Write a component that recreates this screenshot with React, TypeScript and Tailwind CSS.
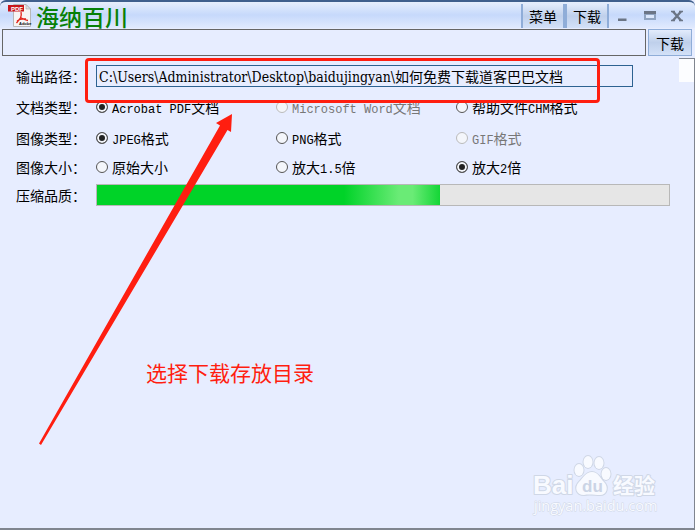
import React from 'react';

type Option = { text: string[]; disabled?: boolean };

const rows: { name: string; label: string; checked: number; height: string; options: Option[] }[] = [
  {
    name: 'doc', label: '文档类型：', checked: 0, height: 'h-8',
    options: [{ text: ['Acrobat PDF', '文档'] }, { text: ['Microsoft Word', '文档'], disabled: true }, { text: ['', '帮助文件', 'CHM', '格式'] }],
  },
  {
    name: 'image', label: '图像类型：', checked: 0, height: 'h-[30px]',
    options: [{ text: ['JPEG', '格式'] }, { text: ['PNG', '格式'] }, { text: ['GIF', '格式'], disabled: true }],
  },
  {
    name: 'size', label: '图像大小：', checked: 2, height: 'h-7',
    options: [{ text: ['', '原始大小'] }, { text: ['', '放大', '1.5', '倍'] }, { text: ['', '放大', '2', '倍'] }],
  },
];

const barButton =
  'border-[#8fadd8] bg-linear-to-b from-[#e3ecfc] via-[#bfd0eb] to-[#d3e1f8] text-sm leading-none text-black';

function PdfIcon() {
  return (
    <svg className="ml-2 h-[23px] w-6 shrink-0 overflow-visible" viewBox="0 0 24 23" aria-hidden="true">
      <path d="M5.500 .5h12.500l4.500 4.500v17.500h-17z" fill="#f7f5f4" stroke="#b8b8b8" />
      <path d="M18 .5v4.500h4.500z" fill="#dedede" stroke="#aaa" strokeWidth=".6" />
      <path d="M0 1h16v6.500H0z" fill="#c8161a" />
      <text x="3" y="6.500" fontSize="6" fontWeight="700" fill="#fff" fontFamily="Liberation Sans">PDF</text>
      <path d="M13 8c.5 2 .5 4-.5 6l-4 5M12.500 13.500c2 1 4 2.500 7.500 3M9 17c2-1.500 5-2.500 9-2" fill="none" stroke="#e2231a" strokeWidth="1.300" />
      <text x="11" y="21" fontSize="4" fontWeight="700" fill="#111" fontFamily="Liberation Sans">Adobe</text>
    </svg>
  );
}

function TitleBar() {
  return (
    <header className="flex h-7 items-start rounded-t-md border-t-2 border-[#3f5f8c] bg-linear-to-b from-[#e6eefc] via-[#c6d9fb] to-[#e1eafe] pr-3 pt-0.5">
      <PdfIcon />
      <h1 className="ml-1 flex-1 text-[23px] font-medium leading-6 text-[#078007]">海纳百川</h1>
      <button type="button" className={`${barButton} h-6 w-11 border-x-2`}>菜单</button>
      <button type="button" className={`${barButton} h-6 w-11 border-x-2`}>下载</button>
      <div className="ml-2 flex h-6 items-center gap-[15px] text-[#6b7585]">
        <button type="button" aria-label="最小化" className="size-3">
          <svg viewBox="0 0 12 12"><path d="M1 8.500h8.500v2.500H1z" fill="currentColor" /></svg>
        </button>
        <button type="button" aria-label="最大化" className="size-3">
          <svg viewBox="0 0 12 12">
            <path d="M0 1h12v9H0z" fill="#8fa3bf" />
            <path d="M0 1h12v3H0z" fill="currentColor" />
            <path d="M2 5h8v3H2z" fill="#dbe7fb" />
          </svg>
        </button>
        <button type="button" aria-label="关闭" className="size-3">
          <svg viewBox="0 0 12 12">
            <path d="M2 1.500l8 9M10 1.500l-8 9" stroke="currentColor" strokeWidth="2.400" />
            <path d="M0 1.500h4M8 1.500h4M0 10.500h4M8 10.500h4" stroke="currentColor" strokeWidth="1.300" />
          </svg>
        </button>
      </div>
    </header>
  );
}

function RadioOption({ name, option, checked }: { name: string; option: Option; checked: boolean }) {
  return (
    <label className={`flex w-[180px] items-center gap-1 whitespace-nowrap ${option.disabled ? 'text-[#777]' : ''}`}>
      <input
        type="radio"
        name={name}
        defaultChecked={checked}
        disabled={option.disabled}
        className="size-3 shrink-0 appearance-none rounded-full border border-[#555] bg-[#f4f6fb] checked:bg-[#222] checked:shadow-[inset_0_0_0_2px_#f4f6fb] disabled:border-[#bbb]"
      />
      <span>
        {option.text.map((part, i) => (
          <span key={i} className={i % 2 === 0 ? "font-['Liberation_Mono',monospace] text-xs" : ''}>{part}</span>
        ))}
      </span>
    </label>
  );
}

function Watermark() {
  return (
    <svg className="absolute bottom-3 right-[37px] h-16 w-[126px] overflow-visible" viewBox="0 0 126 64" role="img" aria-label="Baidu经验">
      <g fill="#f8faff" stroke="#cfd7e6" strokeWidth="2" paintOrder="stroke" strokeLinejoin="round">
        <ellipse cx="47" cy="18" rx="4.500" ry="6" />
        <ellipse cx="56" cy="10" rx="4.500" ry="6" />
        <ellipse cx="67" cy="11" rx="4.500" ry="6" />
        <ellipse cx="74" cy="22" rx="4.500" ry="6" />
        <path d="M60 20c6 0 8 6 12 10 5 5 3 13-4 13-5 0-11-1-16 0-8 0-10-8-5-13 4-4 7-10 13-10z" />
        <text x="1" y="42" fontSize="26" fontWeight="700" fontFamily="Liberation Sans">Bai</text>
        <text x="81" y="41" fontSize="21" fontWeight="700" fontFamily="Noto Sans CJK SC">经验</text>
        <text x="2" y="59" fontSize="14.500" strokeWidth="1" fontFamily="Open Sans">jingyan.baidu.com</text>
      </g>
      <text x="50" y="40" fontSize="17" fontWeight="700" fontFamily="Liberation Sans" fill="#cbd4e5">du</text>
    </svg>
  );
}

function Annotations() {
  return (
    <div className="pointer-events-none">
      <div className="absolute left-[85px] top-[58px] h-[45px] w-[515px] rounded border-3 border-[#ff1e10]" />
      <svg className="absolute left-[30px] top-[110px] h-[340px] w-[210px]" viewBox="30 110 210 340" aria-hidden="true">
        <path d="M39 443.500L220 125.500L216 123L232 114L231 132L227.500 130L41 445z" fill="#ff1e10" />
      </svg>
      <p className="absolute left-[146px] top-[358px] text-[21px] leading-7 text-[#ff1e10]">选择下载存放目录</p>
    </div>
  );
}

export default function App() {
  return (
    <main className="relative flex min-h-screen flex-col border-b-2 border-[#80858f] bg-[#e7edff] font-['Noto_Sans_CJK_SC',sans-serif] text-sm text-black">
      <TitleBar />
      <div className="flex h-7 items-stretch gap-0.5 pl-0.5 pr-[3px] pt-px">
        <input aria-label="网址" className="min-w-0 flex-1 border border-[#666] bg-transparent px-1 outline-none" />
        <button type="button" className={`${barButton} w-11 border`}>下载</button>
      </div>
      <div className="mt-0.5 flex flex-1 border-r border-[#80858f]">
        <form className="flex flex-1 flex-col pl-4 pr-[9px] pt-[3px]">
          <div className="flex h-[30px] items-center">
            <label htmlFor="path" className="w-20 shrink-0">输出路径：</label>
            <input
              id="path"
              defaultValue="C:\Users\Administrator\Desktop\baidujingyan\如何免费下载道客巴巴文档"
              className="mr-[37px] h-[22px] min-w-0 flex-1 border border-[#2d6291] bg-transparent px-0.5 font-['DejaVu_Serif_Condensed','Noto_Sans_CJK_SC',serif] outline-none"
            />
          </div>
          {rows.map((r) => (
            <div key={r.name} role="radiogroup" aria-labelledby={`${r.name}-label`} className={`flex items-center ${r.height}`}>
              <span id={`${r.name}-label`} className="w-20 shrink-0">{r.label}</span>
              {r.options.map((o, i) => (
                <RadioOption key={i} name={r.name} option={o} checked={i === r.checked} />
              ))}
            </div>
          ))}
          <div className="flex h-7 items-center">
            <label htmlFor="quality" className="w-20 shrink-0">压缩品质：</label>
            <progress
              id="quality"
              value={60}
              max={100}
              className="h-[22px] min-w-0 flex-1 appearance-none border border-[#b8b8b8] [&::-webkit-progress-bar]:bg-[#e6e6e6] [&::-webkit-progress-value]:bg-[linear-gradient(90deg,#00d328_72%,#6aeb76_88%,#6aeb76_92%,#14d636)]"
            />
          </div>
        </form>
        <div className="h-6 w-[15px] border-t border-[#80858f] bg-[#fcfdff]" />
      </div>
      <Watermark />
      <Annotations />
    </main>
  );
}
